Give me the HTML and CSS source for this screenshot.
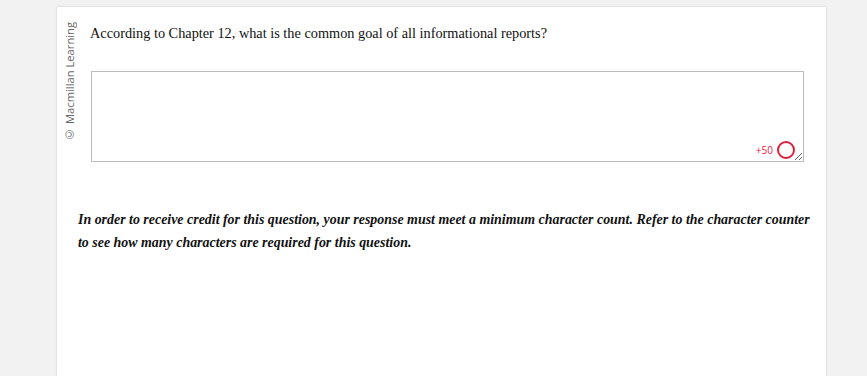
FILE: index.html
```html
<!DOCTYPE html>
<html>
<head>
<meta charset="utf-8">
<link rel="stylesheet" href="styles.css">
</head>
<body>
<div class="card">
  <div class="top">
    <div class="brand"><span class="brand-text">© Macmillan Learning</span></div>
    <div class="content">
      <p class="question">According to Chapter 12, what is the common goal of all informational reports?</p>
      <div class="answer">
        <textarea class="field"></textarea>
        <div class="counter"><span class="count">+50</span><span class="ring"></span></div>
      </div>
    </div>
  </div>
  <p class="note">In order to receive credit for this question, your response must meet a minimum character count. Refer to the character counter to see how many characters are required for this question.</p>
</div>
</body>
</html>
```
FILE: styles.css
```css
html, body {
  margin: 0;
  padding: 0;
  background: #f2f2f2;
  height: 100%;
  overflow: hidden;
}
.card {
  margin: 7px 0 0 57px;
  width: 769px;
  height: 369px;
  background: #fff;
  box-shadow: 0 0 2px rgba(0,0,0,0.18);
}
.top {
  display: flex;
}
.brand {
  width: 33px;
  box-sizing: border-box;
  padding: 15px 0 0 6px;
}
.brand-text {
  display: block;
  writing-mode: vertical-rl;
  transform: rotate(180deg);
  font-family: "Open Sans", sans-serif;
  font-size: 11.2px;
  color: #666;
  white-space: nowrap;
  line-height: 14px;
}
.content {
  flex: 1;
  padding-top: 17px;
}
.question {
  margin: 0;
  font-family: "Liberation Serif", serif;
  font-size: 14.3px;
  line-height: 18px;
  color: #111;
}
.answer {
  position: relative;
  margin: 29px 0 0 1px;
  width: 713px;
  height: 91px;
}
.field {
  display: block;
  box-sizing: border-box;
  width: 100%;
  height: 100%;
  margin: 0;
  border: 1px solid #bcbcbc;
  border-radius: 0;
  resize: both;
  outline: none;
  background: #fff;
}
.counter {
  position: absolute;
  right: 9px;
  bottom: 3px;
  display: flex;
  align-items: center;
  gap: 4px;
}
.count {
  font-family: "Open Sans", sans-serif;
  font-size: 10px;
  color: #e8174b;
}
.ring {
  width: 14px;
  height: 14px;
  border: 2.5px solid #dc1f3e;
  border-radius: 50%;
}
.note {
  margin: 46px 0 0 0;
  padding: 0 8px 0 21px;
  font-family: "Liberation Serif", serif;
  font-size: 13.93px;
  font-style: italic;
  font-weight: bold;
  line-height: 23px;
  color: #111;
}
```
